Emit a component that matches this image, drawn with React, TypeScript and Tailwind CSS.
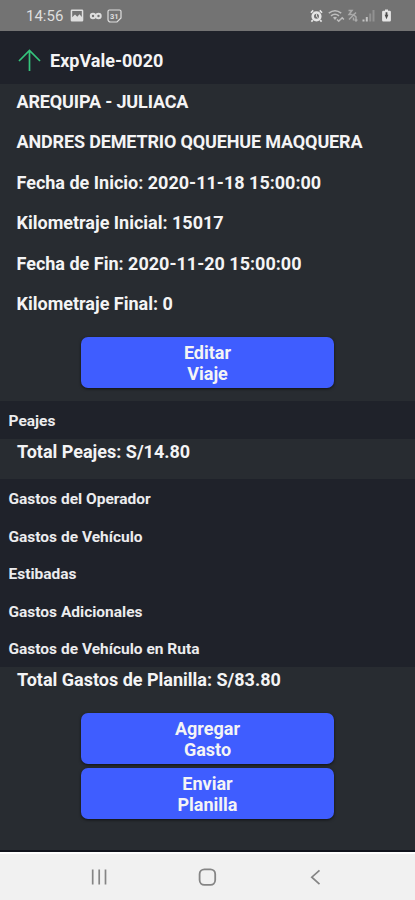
const tripInfo = [
  "Fecha de Inicio: 2020-11-18 15:00:00",
  "Kilometraje Inicial: 15017",
  "Fecha de Fin: 2020-11-20 15:00:00",
  "Kilometraje Final: 0",
];

const expenseSections = [
  "Gastos del Operador",
  "Gastos de Vehículo",
  "Estibadas",
  "Gastos Adicionales",
  "Gastos de Vehículo en Ruta",
];

function StatusBar() {
  return (
    <div className="flex h-[31px] shrink-0 items-center bg-[#737373] pl-[26px] pr-[24px] text-[#dedede]">
      <span className="w-[37px] text-[15px] leading-[20px]">14:56</span>
      <svg className="ml-[7px]" width="14" height="13" viewBox="0 0 14 13">
        <path fillRule="evenodd" fill="currentColor" d="M2 .5h10a1.300 1.300 0 0 1 1.300 1.300v9.400a1.300 1.300 0 0 1-1.300 1.300H2a1.300 1.300 0 0 1-1.300-1.300V1.800A1.300 1.300 0 0 1 2 .5zM2.200 2v6.300L5 5.500l2.300 2.300 2.200-2.600 2.300 2.800V2z" />
      </svg>
      <svg className="ml-[5px]" width="14" height="8" viewBox="0 0 14 8" fill="none" stroke="currentColor" strokeWidth="2">
        <circle cx="4" cy="4" r="2.200" />
        <circle cx="9.500" cy="4" r="2.200" />
      </svg>
      <svg className="ml-[4px]" width="15" height="14" viewBox="0 0 15 14" fill="none" stroke="currentColor" strokeWidth="1.200">
        <path d="M2.500 1h10a1.500 1.500 0 0 1 1.500 1.500V9l-4 4H3.500A2.500 2.500 0 0 1 1 10.500v-8A1.500 1.500 0 0 1 2.500 1z" />
        <text x="7.300" y="9.800" fontSize="7.500" fontWeight="700" textAnchor="middle" fill="currentColor" stroke="none">31</text>
      </svg>
      <div className="ml-auto flex items-center">
        <svg width="13" height="14" viewBox="0 0 14 14" fill="none" stroke="#e6e6e6">
          <circle cx="7" cy="7.300" r="4.100" fill="#737373" strokeWidth="2.800" />
          <path d="M1 3.500 3.500 1M13 3.500 10.500 1M3 11.500 1.500 13M11 11.500l1.500 1.500" strokeWidth="1.800" />
          <path d="M7 5v2.600l1.600 1" strokeWidth="1" />
        </svg>
        <svg className="ml-[5px] text-[#bebebe]" width="17" height="14" viewBox="0 0 17 14" fill="none" stroke="currentColor" strokeWidth="1.600">
          <path d="M.8 4.200c4-3.200 8.400-3.200 12.400 0M3 6.800c2.800-2.200 5.200-2.200 8 0" />
          <path d="M5 8.600c1.400-1 2.600-1 4 0l-2 2.400z" fill="currentColor" stroke="none" />
          <path d="m9 10.500 1.700 1.700 1.700-1.700M12.500 10.500 14.200 8.800l1.700 1.700" strokeWidth="1.500" />
        </svg>
        <svg className="ml-[2px] text-[#aaaaaa]" width="12" height="13" viewBox="0 0 12 13" fill="none" stroke="currentColor" strokeWidth="1.500">
          <path d="M1.500 1.500h3.500l-3 4h3.500M6 5l3.500 3.500M9 3.500 2 10.500M6.500 11.500V8.500M9 8v3.500M7.800 10.500 9 12l1.300-1.500" />
        </svg>
        <svg className="ml-[3px]" width="13" height="13" viewBox="0 0 13 13">
          <path fill="#c4c4c4" d="M.5 10.500h2v2h-2zM3.800 8h2v4.500h-2z" />
          <path fill="#929292" d="M7.200 4.500h2v8h-2zM10.500 1h2v11.500h-2z" />
        </svg>
        <svg className="ml-[7px]" width="9" height="13" viewBox="0 0 9 13">
          <path fill="#e6e6e6" d="M3 .5h3v1.200h1.700a1.200 1.200 0 0 1 1.200 1.200v8.400a1.200 1.200 0 0 1-1.200 1.200H1.300a1.200 1.200 0 0 1-1.200-1.200V2.900a1.200 1.200 0 0 1 1.200-1.200H3z" />
          <path fill="#4d4d4d" d="M3.600 3.200h1.800v2.600h1L4.500 10.300 2.600 5.800h1z" />
        </svg>
      </div>
    </div>
  );
}

function BlueButton({ first, second }: { first: string; second: string }) {
  return (
    <button className="h-[51px] w-[253px] rounded-[7px] bg-[#3f5dff] pt-px text-[18px] font-bold leading-[21px] shadow-[0_1px_3px_rgba(0,0,0,0.6)]">
      {first}
      <br />
      {second}
    </button>
  );
}

function SectionTitle({ text }: { text: string }) {
  return (
    <h2 className="flex h-[37.500px] items-center pl-[8.500px] pt-[3px] text-[15.500px] font-bold text-[#ececee]">
      {text}
    </h2>
  );
}

function NavigationBar() {
  return (
    <div className="flex h-[48px] shrink-0 items-center justify-between border-t-2 border-white bg-[#f1f1f1] px-[89px] text-[#858585]">
      <svg width="20" height="20" viewBox="0 0 20 20" stroke="currentColor" strokeWidth="1.700">
        <path d="M3.700 2.500v15M10.200 2.500v15M16.500 2.500v15" />
      </svg>
      <svg width="20" height="20" viewBox="0 0 20 20" fill="none" stroke="currentColor" strokeWidth="1.800">
        <rect x="1.600" y="2.300" width="15.600" height="15.600" rx="4.800" />
      </svg>
      <svg width="20" height="20" viewBox="0 0 20 20" fill="none" stroke="currentColor" strokeWidth="1.700">
        <path d="m13.500 3.300-7.700 6.900 7.700 6.900" />
      </svg>
    </div>
  );
}

export default function App() {
  return (
    <div className="flex h-[900px] w-[415px] flex-col overflow-hidden bg-[#282c31] font-['Roboto',sans-serif] text-[#f4f4f5]">
      <StatusBar />
      <header className="flex h-[53px] shrink-0 items-center bg-[#1f222a] pl-[18px] pt-[5px]">
        <svg width="23" height="23" viewBox="0 0 23 23" fill="none" stroke="#35c47c" strokeWidth="1.700">
          <path d="M11.500 22V1.500M1 12 11.500 1.500 22 12" />
        </svg>
        <h1 className="ml-[9px] text-[18px] font-bold">ExpVale-0020</h1>
      </header>

      <main className="flex flex-1 flex-col">
        <div className="flex flex-col gap-[19.400px] pl-[16.500px] pt-[7px] text-[18px] font-bold leading-[21px]">
          <p className="tracking-[-0.150px]">AREQUIPA - JULIACA</p>
          <p className="tracking-[-0.150px]">ANDRES DEMETRIO QQUEHUE MAQQUERA</p>
          {tripInfo.map((line) => (
            <p key={line}>{line}</p>
          ))}
        </div>
        <div className="flex justify-center pt-[23px]">
          <BlueButton first="Editar" second="Viaje" />
        </div>

        <section className="mt-[13.500px] bg-[#1f222a]">
          <SectionTitle text="Peajes" />
        </section>
        <p className="h-[40.500px] pl-[17px] pt-[2.500px] text-[18px] font-bold leading-[21px]">Total Peajes: S/14.80</p>

        <section className="bg-[#1f222a]">
          {expenseSections.map((section) => (
            <SectionTitle key={section} text={section} />
          ))}
        </section>
        <p className="pl-[17px] pt-[2px] text-[18px] font-bold leading-[21px]">Total Gastos de Planilla: S/83.80</p>

        <div className="flex flex-col items-center gap-[4.500px] pt-[23px]">
          <BlueButton first="Agregar" second="Gasto" />
          <BlueButton first="Enviar" second="Planilla" />
        </div>
      </main>
      <div className="h-[2px] shrink-0 bg-[#10131c]" />
      <NavigationBar />
    </div>
  );
}
